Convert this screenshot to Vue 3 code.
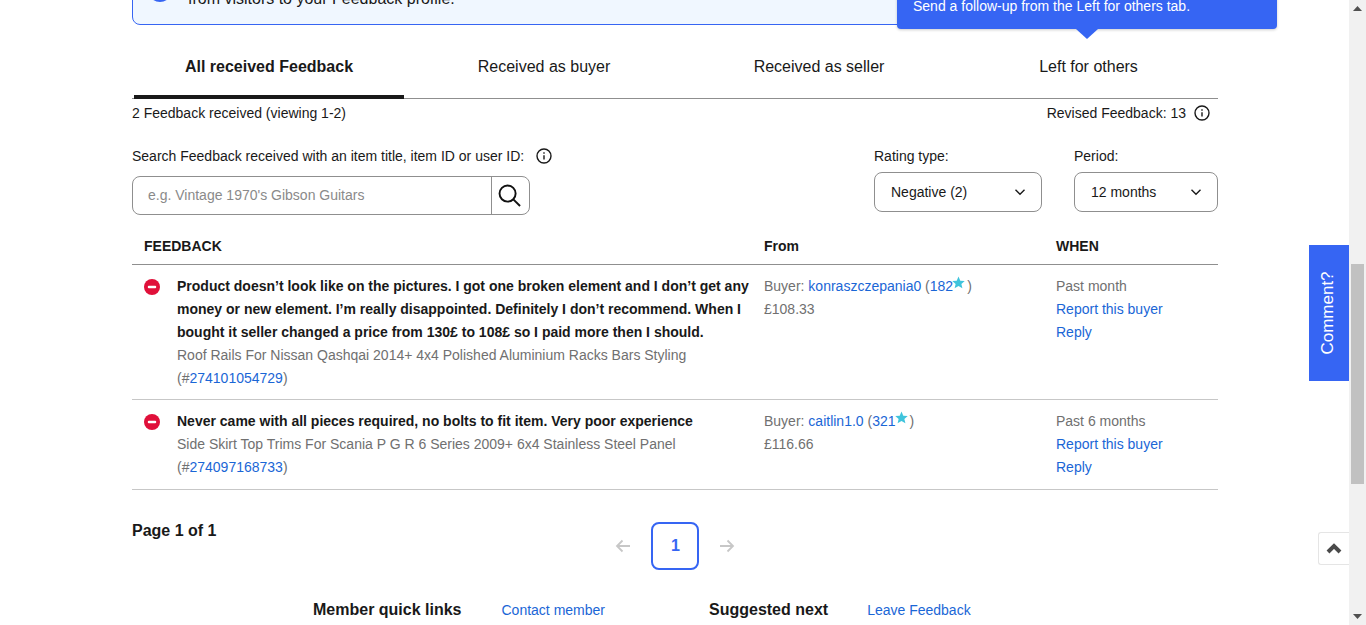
<template>
  <div class="screen">
    <main class="page">
      <section class="banner">
        <span class="banner-dot"></span>
        <p class="banner-text">from visitors to your Feedback profile.</p>
      </section>

      <nav class="tabs">
        <a v-for="(tab, i) in tabs" :key="tab" class="tab" :class="{ active: i === 0 }">{{ tab }}</a>
      </nav>

      <div class="summary">
        <span>2 Feedback received (viewing 1-2)</span>
        <span class="revised">
          Revised Feedback: 13
          <svg class="info" viewBox="0 0 16 16"><circle cx="8" cy="8" r="7" /><path d="M8 7.2v4.2M8 4.3v1.4" /></svg>
        </span>
      </div>

      <div class="filters">
        <div class="search">
          <label class="label">
            Search Feedback received with an item title, item ID or user ID:
            <svg class="info" viewBox="0 0 16 16"><circle cx="8" cy="8" r="7" /><path d="M8 7.2v4.2M8 4.3v1.4" /></svg>
          </label>
          <div class="search-box">
            <span class="placeholder">e.g. Vintage 1970's Gibson Guitars</span>
            <span class="search-btn">
              <svg viewBox="0 0 24 24" class="glass"><circle cx="10" cy="10" r="8.4" /><path d="M16 16l7 7" /></svg>
            </span>
          </div>
        </div>
        <div class="select-group rating">
          <span class="select-label">Rating type:</span>
          <div class="select">
            <span>Negative (2)</span>
            <svg viewBox="0 0 12 8" class="chev"><path d="M1.5 1.8L6 6.2l4.5-4.4" /></svg>
          </div>
        </div>
        <div class="select-group period">
          <span class="select-label">Period:</span>
          <div class="select">
            <span>12 months</span>
            <svg viewBox="0 0 12 8" class="chev"><path d="M1.5 1.8L6 6.2l4.5-4.4" /></svg>
          </div>
        </div>
      </div>

      <div class="table-head">
        <span class="col-a head-a">FEEDBACK</span>
        <span class="col-b">From</span>
        <span class="col-c">WHEN</span>
      </div>

      <article v-for="row in rows" :key="row.id" class="row">
        <div class="col-a row-main">
          <svg class="neg" viewBox="0 0 16 16"><circle cx="8" cy="8" r="8" /><rect x="3.8" y="6.8" width="8.4" height="2.4" rx="1" /></svg>
          <div>
            <p class="comment">{{ row.comment }}</p>
            <p class="item">{{ row.item }}</p>
            <p class="item">(#<a class="link">{{ row.id }}</a>)</p>
          </div>
        </div>
        <div class="col-b">
          <p class="item">Buyer: <a class="link">{{ row.buyer }}</a> <span class="score">(<a class="link">{{ row.score }}</a><svg class="star" viewBox="0 0 24 24"><path d="M12 1l3.3 7.6 8.2.7-6.2 5.4 1.9 8L12 18.3 4.800 22.700l1.900-8L.5 9.300l8.200-.7z" /></svg>)</span></p>
          <p class="item">{{ row.price }}</p>
        </div>
        <div class="col-c">
          <p class="item">{{ row.when }}</p>
          <p><a class="link">Report this buyer</a></p>
          <p><a class="link">Reply</a></p>
        </div>
      </article>

      <div class="pager-row">
        <strong class="page-count">Page 1 of 1</strong>
        <div class="pager">
          <svg class="arrow" viewBox="0 0 16 14"><path d="M15 7H2M7.500 1.500L2 7l5.500 5.500" /></svg>
          <span class="page-current">1</span>
          <svg class="arrow" viewBox="0 0 16 14"><path d="M1 7h13M8.500 1.500L14 7l-5.500 5.500" /></svg>
        </div>
      </div>

      <footer class="quick">
        <strong class="quick-title">Member quick links</strong>
        <a class="link quick-link">Contact member</a>
        <strong class="quick-title next">Suggested next</strong>
        <a class="link">Leave Feedback</a>
      </footer>
    </main>

    <aside class="scrollbar">
      <svg class="sb-arrow" viewBox="0 0 9 5"><path d="M4.500 0L9 5H0z" /></svg>
      <span class="sb-thumb"></span>
      <svg class="sb-arrow bottom" viewBox="0 0 9 5"><path d="M0 0h9L4.500 5z" /></svg>
    </aside>

    <div class="tooltip">Send a follow-up from the Left for others tab.</div>
    <button class="comment-tab"><span>Comment?</span></button>
    <button class="to-top">
      <svg viewBox="0 0 16 11"><path d="M2 9l6-6 6 6" /></svg>
    </button>
  </div>
</template>

<script setup>
const tabs = ['All received Feedback', 'Received as buyer', 'Received as seller', 'Left for others']

const rows = [
  {
    id: '274101054729',
    comment:
      'Product doesn’t look like on the pictures. I got one broken element and I don’t get any money or new element. I’m really disappointed. Definitely I don’t recommend. When I bought it seller changed a price from 130£ to 108£ so I paid more then I should.',
    item: 'Roof Rails For Nissan Qashqai 2014+ 4x4 Polished Aluminium Racks Bars Styling',
    buyer: 'konraszczepania0',
    score: '182',
    price: '£108.33',
    when: 'Past month'
  },
  {
    id: '274097168733',
    comment: 'Never came with all pieces required, no bolts to fit item. Very poor experience',
    item: 'Side Skirt Top Trims For Scania P G R 6 Series 2009+ 6x4 Stainless Steel Panel',
    buyer: 'caitlin1.0',
    score: '321',
    price: '£116.66',
    when: 'Past 6 months'
  }
]
</script>

<style>
html, body { margin: 0; overflow: hidden; background: #fff; }
</style>

<style scoped>
.screen {
  position: relative;
  display: flex;
  width: 1366px;
  height: 625px;
  overflow: hidden;
  font-family: "Liberation Sans", Arial, sans-serif;
  font-size: 14px;
  color: #191919;
  background: #fff;
}
p { margin: 0; }
.page { width: 1086px; padding-left: 132px; flex: none; }
.scrollbar {
  position: relative;
  margin-left: auto;
  width: 17px;
  background: #f1f1f1;
}
.sb-thumb {
  position: absolute;
  left: 2px;
  top: 264px;
  width: 13px;
  height: 220px;
  background: #c1c1c1;
}
.sb-arrow { position: absolute; left: 4px; top: 6px; width: 9px; height: 5px; fill: #505050; }
.sb-arrow.bottom { top: 614px; }

.banner {
  display: flex;
  align-items: flex-end;
  height: 60px;
  margin-top: -35px;
  box-sizing: border-box;
  padding: 0 0 15px 15px;
  border: 1px solid #3665f3;
  border-radius: 0 0 8px 8px;
  background: #f0f7ff;
}
.banner-dot { width: 24px; height: 24px; margin-bottom: 7px; border-radius: 50%; background: #3665f3; flex: none; }
.banner-text { margin-left: 16px; font-size: 16px; line-height: 20px; }

.tabs { display: flex; height: 74px; border-bottom: 1px solid #8f8f8f; padding-left: 2px; box-sizing: border-box; }
.tab {
  width: 270px;
  margin-right: 5px;
  padding-top: 32px;
  box-sizing: border-box;
  text-align: center;
  font-size: 16px;
  line-height: 20px;
  color: #191919;
}
.tab:last-child { width: auto; flex: 1; margin-right: 0; }
.tab.active { font-weight: 700; border-bottom: 4px solid #191919; margin-bottom: -1px; height: 74px; }

.summary { display: flex; justify-content: space-between; align-items: center; height: 28px; }
.revised { display: flex; align-items: center; gap: 8px; margin-right: 8px; }
.info { width: 16px; height: 16px; fill: none; stroke: #191919; stroke-width: 1.4; flex: none; }

.filters { display: flex; margin-top: 14px; height: 89px; }
.search { width: 398px; }
.label { display: flex; align-items: center; gap: 12px; height: 20px; white-space: nowrap; margin-top: 5px; }
.search-box {
  display: flex;
  height: 39px;
  margin-top: 10px;
  border: 1px solid #8f8f8f;
  border-radius: 8px;
  box-sizing: border-box;
}
.placeholder { flex: 1; padding-left: 15px; line-height: 37px; color: #8a8a8a; }
.search-btn { display: flex; width: 38px; padding-right: 2px; box-sizing: border-box; align-items: center; justify-content: center; border-left: 1px solid #8f8f8f; }
.glass { width: 23px; height: 23px; fill: none; stroke: #111; stroke-width: 2; }
.select-group { display: flex; flex-direction: column; }
.rating { width: 168px; margin-left: 344px; }
.period { width: 144px; margin-left: 32px; }
.select-label { line-height: 20px; margin-top: 5px; }
.select {
  display: flex;
  align-items: center;
  justify-content: space-between;
  height: 40px;
  margin-top: 6px;
  padding: 0 15px 0 16px;
  border: 1px solid #8f8f8f;
  border-radius: 8px;
  box-sizing: border-box;
}
.chev { width: 12px; height: 8px; fill: none; stroke: #191919; stroke-width: 1.4; }

.table-head {
  display: flex;
  align-items: center;
  height: 32px;
  padding-bottom: 2px;
  border-bottom: 1px solid #8f8f8f;
  font-weight: 700;
}
.head-a { padding-left: 12px; box-sizing: border-box; }
.col-a { width: 632px; flex: none; }
.col-b { width: 292px; flex: none; }
.col-c { flex: 1; }

.row { display: flex; padding: 10px 0 9px; border-bottom: 1px solid #c7c7c7; line-height: 23px; }
.row:last-of-type { padding-bottom: 10px; }
.row-main { display: flex; box-sizing: border-box; padding: 0 12px; gap: 17px; }
.neg { width: 16px; height: 16px; margin-top: 4px; flex: none; fill: #e0103a; }
.neg rect { fill: #fff; }
.comment { font-weight: 700; color: #191919; }
.item { color: #707070; }
.link { color: #1a66d6; text-decoration: none; }
.score { color: #707070; }
.star { width: 13px; height: 13px; fill: #3fc4dc; vertical-align: 2px; margin: 0 2px 0 -1px; }

.pager-row { display: flex; height: 90px; }
.page-count { font-size: 16px; line-height: 20px; margin-top: 31px; height: 20px; }
.pager { display: flex; align-items: center; gap: 20px; margin-left: 399px; align-self: flex-start; height: 48px; margin-top: 32px; }
.arrow { width: 16px; height: 14px; fill: none; stroke: #c7c7c7; stroke-width: 1.8; }
.page-current {
  display: flex;
  align-items: center;
  justify-content: center;
  width: 48px;
  height: 48px;
  box-sizing: border-box;
  border: 2px solid #3665f3;
  border-radius: 8px;
  font-size: 16px;
  font-weight: 700;
  color: #3665f3;
}

.quick { display: flex; align-items: center; height: 20px; margin-top: 20px; }
.quick-title { font-size: 16px; margin-left: 181px; }
.quick-link { margin-left: 40px; }
.next { margin-left: 104px; margin-right: 39px; }

.tooltip {
  position: absolute;
  left: 897px;
  top: -20px;
  width: 380px;
  height: 49px;
  box-sizing: border-box;
  padding: 16px 16px 0;
  background: #3665f3;
  border-radius: 0 0 4px 4px;
  color: #fff;
  font-size: 14px;
  line-height: 20px;
  box-shadow: 0 1px 3px rgba(0, 0, 0, .2);
}
.tooltip::after {
  content: "";
  position: absolute;
  left: 179px;
  top: 49px;
  border-left: 11px solid transparent;
  border-right: 11px solid transparent;
  border-top: 10px solid #3665f3;
}
.comment-tab {
  position: absolute;
  left: 1309px;
  top: 245px;
  width: 40px;
  height: 136px;
  border: 0;
  padding: 0 2px 0 0;
  background: #3665f3;
  color: #fff;
  font-family: inherit;
  font-size: 17px;
  display: flex;
  align-items: center;
  justify-content: center;
}
.comment-tab span { transform: rotate(-90deg); white-space: nowrap; display: block; }
.to-top {
  position: absolute;
  left: 1318px;
  top: 532px;
  width: 31px;
  height: 33px;
  padding: 0;
  box-sizing: border-box;
  background: #fff;
  border: 1px solid #e5e5e5;
  border-right: 0;
  border-radius: 3px 0 0 3px;
  display: flex;
  align-items: center;
  justify-content: center;
}
.to-top svg { width: 16px; height: 11px; fill: none; stroke: #4a4a4a; stroke-width: 4; }
</style>
